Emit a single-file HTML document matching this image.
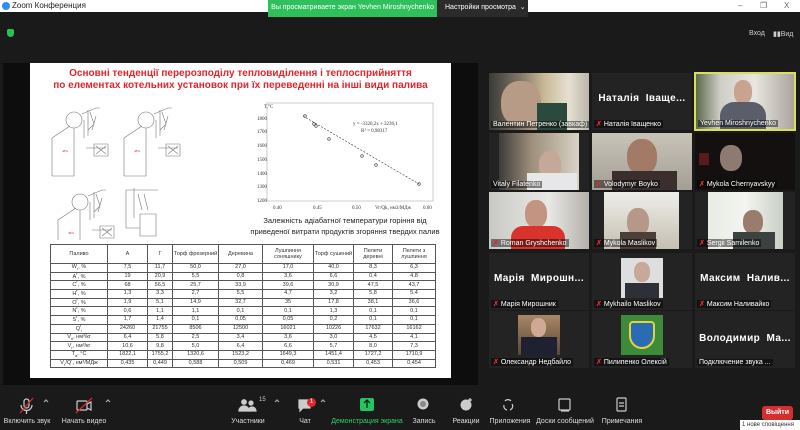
<!DOCTYPE html>
<html><head><meta charset="utf-8"><style>
*{margin:0;padding:0;box-sizing:border-box}
body{width:800px;height:430px;background:#1a1a1a;font-family:"Liberation Sans",sans-serif;position:relative;overflow:hidden;color:#fff}
.a{position:absolute}
.tile{position:absolute;width:100px;height:57px;background:#232323;overflow:hidden}
.nm{position:absolute;left:2px;bottom:2px;font-size:7px;color:#fff;background:rgba(0,0,0,.45);padding:0 2px;white-space:nowrap}
.mic{color:#e0282e;font-weight:bold}
.big{position:absolute;left:0;right:0;top:20px;text-align:center;font-size:10px;font-weight:bold;color:#fff;letter-spacing:.4px;white-space:nowrap}
.lb{position:absolute;top:418px;font-size:7px;color:#ddd;transform:translateX(-50%);white-space:nowrap}
table{border-collapse:collapse;font-size:5.5px;color:#333;table-layout:fixed}
td{border:1px solid #555;text-align:center;height:8.7px;line-height:5px;padding:0;overflow:hidden;white-space:nowrap}
tr.h td{white-space:normal;height:19px;line-height:6px}
sub,sup{line-height:0;font-size:4px}
</style></head><body>
<div class="a" style="left:0;top:0;width:800px;height:12px;background:#fff"></div>
<div class="a" style="left:2px;top:2px;width:8px;height:8px;border-radius:50%;background:#2d8cff"></div>
<div class="a" style="left:12px;top:1px;font-size:8px;color:#222">Zoom Конференция</div>
<div class="a" style="left:268px;top:0;width:169px;height:17px;background:#2fc05c;font-size:7px;color:#fff;text-align:center;line-height:16px">Вы просматриваете экран Yevhen Miroshnychenko</div>
<div class="a" style="left:437px;top:0;width:91px;height:17px;background:#2b2b2b;font-size:7px;color:#fff;line-height:16px;padding-left:8px">Настройки просмотра &nbsp;⌄</div>
<div class="a" style="left:738px;top:1px;font-size:8px;color:#666">–</div>
<div class="a" style="left:760px;top:1px;font-size:8px;color:#666">❐</div>
<div class="a" style="left:784px;top:1px;font-size:8px;color:#666">X</div>
<div class="a" style="left:7px;top:29px;width:7px;height:8px;background:#23c552;border-radius:2px 2px 4px 4px"></div>
<div class="a" style="left:749px;top:30px;font-size:7px;color:#ccc">Вход</div>
<div class="a" style="left:773px;top:30px;font-size:7px;color:#ccc">▮▮Вид</div>

<div class="a" style="left:3px;top:63px;width:475px;height:322px;background:#0d0d0d"></div>
<div class="a" style="left:30px;top:63px;width:421px;height:315px;background:#fff"></div>
<div class="a" style="left:30px;top:68px;width:421px;text-align:center;font-size:10px;font-weight:bold;color:#e3242b;line-height:12px">Основні тенденції перерозподілу тепловиділення і теплосприйняття<br>по елементах котельних установок при їх переведенні на інші види палива</div>

<svg class="a" style="left:48px;top:100px" width="150" height="140" stroke="#777" fill="none" stroke-width=".6">
<defs><g id="d"><circle cx="26" cy="20" r="8"/><path d="M4 38 L22 26 M26 28 L26 76 M4 38 L4 76 L26 76 M34 14 L48 8 L52 8 M36 20 L36 38 M40 10 L40 36 M42 12 L46 24 L40 30 M48 16 L44 30 M38 48 L58 48 M46 44 L60 44 L60 56 L46 56 Z M48 46 L58 54 M58 46 L48 54"/><text x="14" y="52" fill="#c33" stroke="none" font-size="3">48%</text></g></defs>
<use href="#d" x="0" y="0"/>
<use href="#d" x="72" y="0"/>
<use href="#d" x="6" y="82"/>
<path d="M78 90 L78 128 L92 128 M78 90 L110 90 M86 88 L86 118 M90 94 L94 110 M96 94 L100 110 M92 114 L108 114 L108 136 L92 136 Z"/>
</svg>

<svg class="a" style="left:255px;top:100px" width="185" height="112" font-family="Liberation Serif" font-size="5" fill="#333">
<rect x="12" y="3" width="166" height="98" fill="none" stroke="#aaa" stroke-width=".6"/>
<text x="9" y="8">T,°C</text>
<text x="2" y="20">1800</text><text x="2" y="33">1700</text><text x="2" y="47">1600</text><text x="2" y="61">1500</text><text x="2" y="75">1400</text><text x="2" y="88">1300</text><text x="2" y="102">1200</text>
<text x="18" y="109">0.40</text><text x="58" y="109">0.45</text><text x="97" y="109">0.50</text><text x="120" y="109">Vr/Qk, нм3/МДж</text><text x="168" y="109">0.60</text>
<path d="M48 16 L164 84" stroke="#333" stroke-width=".6" stroke-dasharray="2 1.5"/>
<g fill="none" stroke="#333" stroke-width=".6"><circle cx="50" cy="16" r="1.3"/><circle cx="59" cy="24" r="1.3"/><circle cx="61" cy="26" r="1.3"/><circle cx="74" cy="39" r="1.3"/><circle cx="107" cy="56" r="1.3"/><circle cx="121" cy="65" r="1.3"/><circle cx="164" cy="84" r="1.3"/></g>
<text x="98" y="25">y = -3320,2x + 3236,1</text><text x="106" y="32">R² = 0,98317</text>
</svg>
<div class="a" style="left:240px;top:215px;width:210px;text-align:center;font-size:7.5px;color:#222;line-height:11px">Залежність адіабатної температури горіння від<br>приведеної витрати продуктів згоряння твердих палив</div>

<table class="a" style="left:50px;top:244px;width:385px">
<colgroup><col style="width:57px"><col style="width:40px"><col style="width:25px"><col style="width:46px"><col style="width:44px"><col style="width:51px"><col style="width:40px"><col style="width:39px"><col style="width:43px"></colgroup>
<tr class="h"><td>Паливо</td><td>А</td><td>Г</td><td>Торф фрезерний</td><td>Деревина</td><td>Лушпиння соняшнику</td><td>Торф сушений</td><td>Пелети деревні</td><td>Пелети з лушпиння</td></tr>
<tr><td>W<sub>r</sub>, %</td><td>7,5</td><td>11,7</td><td>50,0</td><td>27,0</td><td>17,0</td><td>40,0</td><td>8,3</td><td>6,3</td></tr>
<tr><td>A<sup>r</sup>, %</td><td>19</td><td>20,9</td><td>5,5</td><td>0,8</td><td>3,6</td><td>6,6</td><td>0,4</td><td>4,8</td></tr>
<tr><td>C<sup>r</sup>, %</td><td>68</td><td>56,5</td><td>25,7</td><td>33,9</td><td>39,6</td><td>30,9</td><td>47,5</td><td>43,7</td></tr>
<tr><td>H<sup>r</sup>, %</td><td>1,3</td><td>3,3</td><td>2,7</td><td>5,5</td><td>4,7</td><td>3,2</td><td>5,8</td><td>5,4</td></tr>
<tr><td>O<sup>r</sup>, %</td><td>1,9</td><td>5,1</td><td>14,9</td><td>32,7</td><td>35</td><td>17,8</td><td>38,1</td><td>36,6</td></tr>
<tr><td>N<sup>r</sup>, %</td><td>0,6</td><td>1,1</td><td>1,1</td><td>0,1</td><td>0,1</td><td>1,3</td><td>0,1</td><td>0,1</td></tr>
<tr><td>S<sup>r</sup>, %</td><td>1,7</td><td>1,4</td><td>0,1</td><td>0,05</td><td>0,05</td><td>0,2</td><td>0,1</td><td>0,1</td></tr>
<tr><td>Q<sup>r</sup><sub>i</sub></td><td>24260</td><td>21755</td><td>8506</td><td>12500</td><td>16021</td><td>10226</td><td>17632</td><td>16162</td></tr>
<tr><td>V<sub>н</sub>, нм³/кг</td><td>6,4</td><td>5,8</td><td>2,5</td><td>3,4</td><td>3,6</td><td>3,0</td><td>4,5</td><td>4,1</td></tr>
<tr><td>V<sub>г</sub>, нм³/кг</td><td>10,6</td><td>9,8</td><td>5,0</td><td>6,4</td><td>6,6</td><td>5,7</td><td>8,0</td><td>7,3</td></tr>
<tr><td>T<sub>a</sub>, °C</td><td>1822,1</td><td>1755,2</td><td>1320,6</td><td>1523,2</td><td>1649,3</td><td>1451,4</td><td>1727,2</td><td>1710,9</td></tr>
<tr><td>V<sub>г</sub>/Q<sup>r</sup>, нм³/МДж</td><td>0,435</td><td>0,449</td><td>0,588</td><td>0,509</td><td>0,469</td><td>0,531</td><td>0,453</td><td>0,454</td></tr>
</table>

<div class="tile" style="left:489px;top:73px;background:linear-gradient(90deg,#3a3a36 0,#7d7466 30%,#c9b894 55%,#e6e0d2 80%,#bcb6ab 100%)"><div class="a" style="left:12px;top:8px;width:40px;height:45px;border-radius:45%;background:#b89b86"></div><div class="a" style="left:48px;top:30px;width:30px;height:27px;background:#294a3c"></div><div class="nm">Валентин Петренко (завкаф) ІІ...</div></div>
<div class="tile" style="left:592px;top:73px"><div class="big">Наталія&nbsp; Іващe...</div><div class="nm"><span class="mic">✗</span> Наталія Іващенко</div></div>
<div class="tile" style="left:694px;top:72px;width:102px;height:59px;border:2px solid #d8e05a;background:linear-gradient(90deg,#5c6a4c 0,#cfcfc8 25%,#e8e6e0 60%,#aaa49c 100%)"><div class="a" style="left:38px;top:6px;width:18px;height:24px;border-radius:45%;background:#c9a390"></div><div class="a" style="left:24px;top:28px;width:46px;height:30px;border-radius:14px 14px 0 0;background:#5a5e6a"></div><div class="nm">Yevhen Miroshnychenko</div></div>

<div class="tile" style="left:489px;top:133px"><div class="a" style="left:10px;top:0;width:80px;height:57px;background:linear-gradient(90deg,#3d3c3a,#9c8e7a 40%,#d9d3c6)"></div><div class="a" style="left:50px;top:18px;width:22px;height:28px;border-radius:45%;background:#c4a898"></div><div class="a" style="left:38px;top:40px;width:50px;height:17px;background:#e7e7ea"></div><div class="nm">Vitaly Filatenko</div></div>
<div class="tile" style="left:592px;top:133px;background:linear-gradient(#c8c4b8,#a49f95)"><div class="a" style="left:35px;top:6px;width:30px;height:36px;border-radius:45%;background:#a27a66"></div><div class="a" style="left:20px;top:38px;width:65px;height:19px;background:#3a2f2c"></div><div class="nm"><span class="mic">✗</span> Volodymyr Boyko</div></div>
<div class="tile" style="left:695px;top:133px;background:#151010"><div class="a" style="left:25px;top:12px;width:22px;height:26px;border-radius:45%;background:#8d7b72"></div><div class="a" style="left:4px;top:20px;width:10px;height:12px;background:#5a1a1a"></div><div class="nm"><span class="mic">✗</span> Mykola Chernyavskyy</div></div>

<div class="tile" style="left:489px;top:192px;background:linear-gradient(90deg,#c8c8c4,#e8e8e4 60%,#b4b0aa)"><div class="a" style="left:36px;top:8px;width:22px;height:28px;border-radius:45%;background:#c39580"></div><div class="a" style="left:22px;top:34px;width:54px;height:23px;border-radius:12px 12px 0 0;background:#d8332c"></div><div class="nm"><span class="mic">✗</span> Roman Gryshchenko</div></div>
<div class="tile" style="left:592px;top:192px"><div class="a" style="left:12px;top:0;width:75px;height:57px;background:linear-gradient(#eeeeea,#c5bfb0)"></div><div class="a" style="left:35px;top:16px;width:22px;height:28px;border-radius:45%;background:#b59888"></div><div class="a" style="left:28px;top:40px;width:36px;height:17px;background:#4a4038"></div><div class="nm"><span class="mic">✗</span> Mykola Maslikov</div></div>
<div class="tile" style="left:695px;top:192px"><div class="a" style="left:13px;top:0;width:75px;height:57px;background:linear-gradient(90deg,#e8ece4,#f4f4f0 50%,#c8d0c4)"></div><div class="a" style="left:48px;top:18px;width:20px;height:24px;border-radius:45%;background:#9a7c6c"></div><div class="a" style="left:38px;top:40px;width:42px;height:17px;background:#3b4240"></div><div class="nm"><span class="mic">✗</span> Sergii Samilenko</div></div>

<div class="tile" style="left:489px;top:253px"><div class="big">Марія&nbsp; Мирошн...</div><div class="nm"><span class="mic">✗</span> Марія Мирошник</div></div>
<div class="tile" style="left:592px;top:253px"><div class="a" style="left:29px;top:5px;width:42px;height:40px;background:#dedede"></div><div class="a" style="left:42px;top:9px;width:16px;height:20px;border-radius:45%;background:#c8a898"></div><div class="a" style="left:33px;top:30px;width:34px;height:15px;background:#2e3038"></div><div class="nm"><span class="mic">✗</span> Mykhailo Maslikov</div></div>
<div class="tile" style="left:695px;top:253px"><div class="big">Максим&nbsp; Налив...</div><div class="nm"><span class="mic">✗</span> Максим Наливайко</div></div>

<div class="tile" style="left:489px;top:311px"><div class="a" style="left:29px;top:4px;width:42px;height:40px;background:linear-gradient(#a88866,#5a4636)"></div><div class="a" style="left:42px;top:7px;width:15px;height:19px;border-radius:45%;background:#d0a896"></div><div class="a" style="left:32px;top:26px;width:36px;height:18px;background:#1e2230"></div><div class="nm"><span class="mic">✗</span> Олександр Недбайло</div></div>
<div class="tile" style="left:592px;top:311px"><div class="a" style="left:29px;top:4px;width:42px;height:40px;background:#3c8a3a"></div><div class="a" style="left:37px;top:10px;width:26px;height:28px;border-radius:4px 4px 13px 13px;background:#2a6cb4;border:2px solid #e8d040"></div><div class="nm"><span class="mic">✗</span> Пилипенко Олексій</div></div>
<div class="tile" style="left:695px;top:311px"><div class="big" style="top:22px">Володимир&nbsp; Ма...</div><div class="nm">Подключение звука ...</div></div>

<svg class="a" style="left:0;top:396px" width="800" height="22" fill="none" stroke="#ccc" stroke-width="1.2">
<rect x="24" y="3" width="5" height="9" rx="2.5"/><path d="M21 9 a5.5 5.5 0 0 0 11 0 M26.5 15v3"/><path d="M20 17 L33 2" stroke="#e0282e"/>
<path d="M44 6 l2 -2 l2 2" stroke="#aaa"/>
<rect x="77" y="5" width="10" height="9" rx="1"/><path d="M87 8 l4 -2 v8 l-4 -2"/><path d="M76 17 L92 2" stroke="#e0282e"/>
<path d="M106 6 l2 -2 l2 2" stroke="#aaa"/>
<circle cx="244" cy="6" r="2.3" fill="#ccc"/><path d="M239 15 a5 5 0 0 1 10 0z" fill="#ccc"/><circle cx="251" cy="7" r="2" fill="#ccc"/><path d="M248 15 a4 4 0 0 1 8 0z" fill="#ccc"/>
<path d="M275 6 l2 -2 l2 2" stroke="#aaa"/>
<path d="M299 4 h11 v8 h-7 l-3 3 v-3 h-1z" fill="#ccc"/>
<path d="M321 6 l2 -2 l2 2" stroke="#aaa"/>
<rect x="360" y="2" width="14" height="13" rx="2" fill="#22c55e" stroke="none"/><path d="M367 12 v-7 M364 7 l3 -3 l3 3" stroke="#111"/>
<circle cx="423" cy="8" r="5.5" fill="#ccc" stroke="none"/><circle cx="423" cy="8" r="3" fill="#888" stroke="none"/>
<circle cx="466" cy="9" r="5.5" fill="#ccc" stroke="none"/><path d="M470 2 v4 M468 4 h4" />
<path d="M505 5 a4 4 0 0 1 6 0 M512 8 a4 4 0 0 1 -2 6 M504 9 a4 4 0 0 0 3 5"/>
<rect x="559" y="3" width="11" height="11" rx="1"/><path d="M561 15 h8"/>
<rect x="617" y="2" width="9" height="13" rx="1"/><path d="M619 7 h5 M619 10 h5"/>
</svg>
<div class="a" style="left:307px;top:398px;width:9px;height:9px;border-radius:50%;background:#e0282e;font-size:6px;text-align:center;line-height:9px">1</div>
<div class="a" style="left:259px;top:397px;font-size:6px;color:#ccc">15</div>
<div class="lb" style="left:27px">Включить звук</div>
<div class="lb" style="left:84px">Начать видео</div>
<div class="lb" style="left:248px">Участники</div>
<div class="lb" style="left:305px">Чат</div>
<div class="lb" style="left:367px;color:#2fd16a">Демонстрация экрана</div>
<div class="lb" style="left:424px">Запись</div>
<div class="lb" style="left:466px">Реакции</div>
<div class="lb" style="left:510px">Приложения</div>
<div class="lb" style="left:565px">Доски сообщений</div>
<div class="lb" style="left:622px">Примечания</div>
<div class="a" style="left:762px;top:406px;width:31px;height:14px;background:#d32f2f;border-radius:3px;font-size:7px;font-weight:bold;text-align:center;line-height:14px">Выйти</div>
<div class="a" style="left:740px;top:420px;width:60px;height:10px;background:#fff;color:#333;font-size:6px;line-height:10px;padding-left:2px">1 нове сповіщення</div>
</body></html>
